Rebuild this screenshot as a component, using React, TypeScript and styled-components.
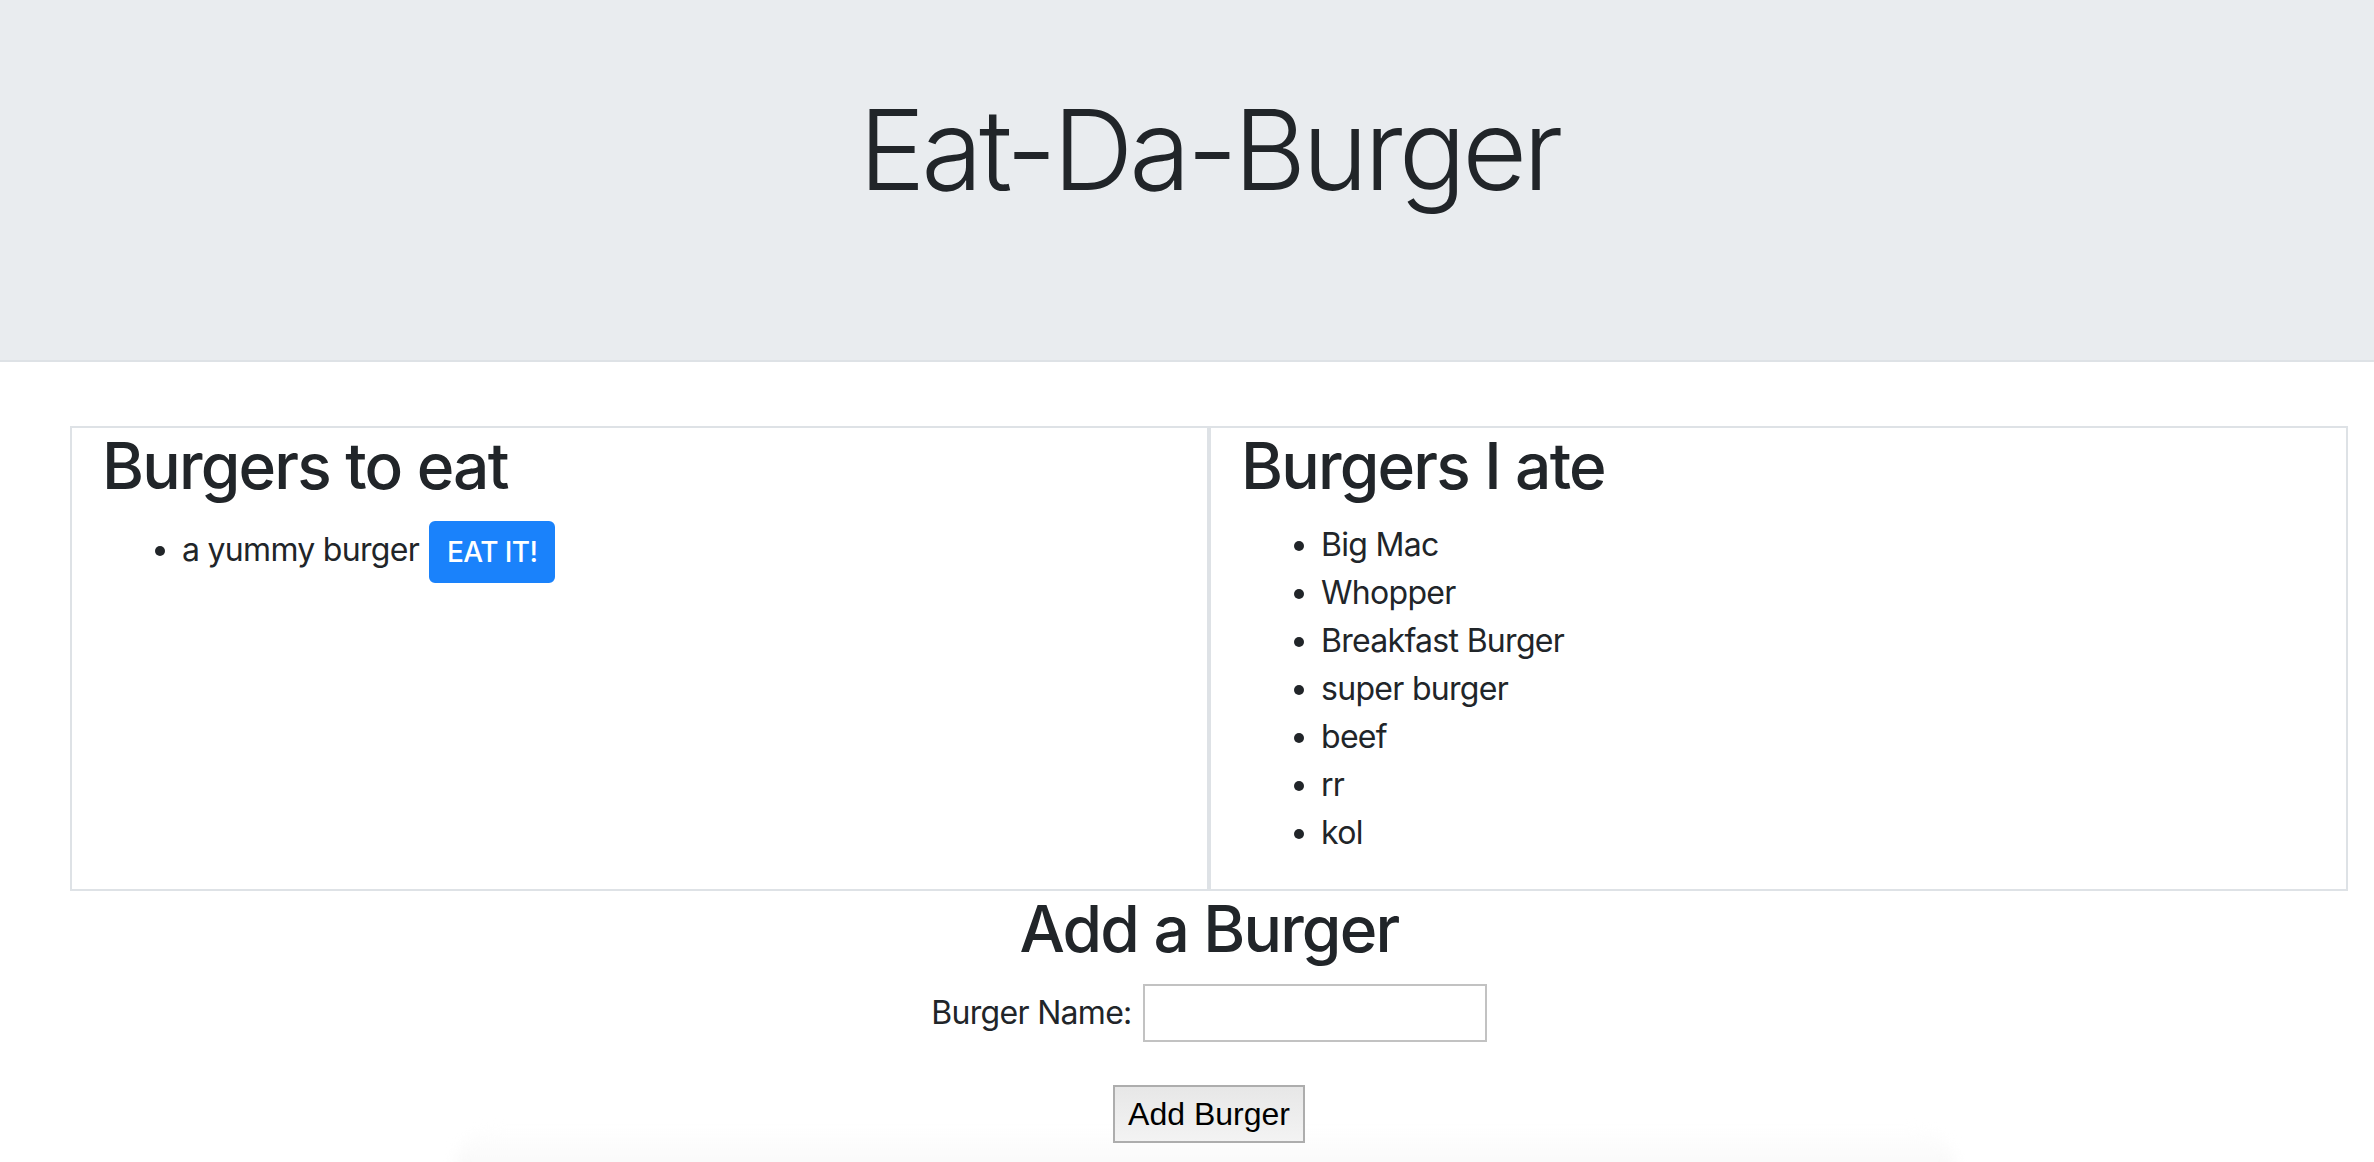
import React from "react";
import styled, { createGlobalStyle } from "styled-components";

const GlobalStyle = createGlobalStyle`
  html, body {
    margin: 0;
    padding: 0;
    background: #ffffff;
  }
  body {
    font-family: Inter, "Noto Sans", Roboto, sans-serif;
    font-size: 32px;
    line-height: 1.5;
    color: #212529;
    letter-spacing: -0.7px;
  }
  *, *::before, *::after { box-sizing: border-box; }
`;

const Page = styled.div`
  position: relative;
  min-height: 1162px;
  overflow: hidden;
`;

const Jumbotron = styled.header`
  height: 362px;
  background: #e9ecef;
  border-bottom: 2px solid #dee2e6;
  padding: 82px 26px 0 70px;
  margin-bottom: 64px;
`;

const Title = styled.h1`
  margin: 0;
  text-align: center;
  font-size: 112px;
  font-weight: 300;
  line-height: 1.2;
  letter-spacing: -4px;
`;

const Main = styled.main`
  margin: 0 26px 0 70px;
`;

const Columns = styled.div`
  display: grid;
  grid-template-columns: 1fr 1fr;
`;

const Panel = styled.section`
  border: 2px solid #dee2e6;
  padding: 0 30px;
`;

const Heading = styled.h2`
  margin: 0 0 16px;
  font-size: 64px;
  font-weight: 500;
  line-height: 1.2;
  letter-spacing: -1.8px;
`;

const CenterHeading = styled(Heading)`
  text-align: center;
`;

const List = styled.ul`
  margin: 0 0 32px;
  padding-left: 80px;
  list-style: disc;
`;

const Item = styled.li`
  font-size: 32px;
  line-height: 48px;
`;

const EatButton = styled.button`
  display: inline-block;
  vertical-align: middle;
  margin-left: 10px;
  padding: 8px 16px;
  font-family: Inter, "Noto Sans", sans-serif;
  font-size: 28px;
  line-height: 1.5;
  font-weight: 500;
  letter-spacing: -0.6px;
  color: #ffffff;
  background: #1a82fb;
  border: 2px solid #1a82fb;
  border-radius: 6px;
  cursor: pointer;
`;

const Form = styled.form`
  display: flex;
  flex-direction: column;
  align-items: center;
`;

const FieldRow = styled.div`
  display: flex;
  align-items: center;
  gap: 11px;
`;

const Label = styled.label`
  font-size: 32px;
  line-height: 48px;
`;

const TextInput = styled.input`
  width: 344px;
  height: 58px;
  padding: 2px 4px;
  font-family: Inter, sans-serif;
  font-size: 32px;
  border: 2px solid #c2c2c2;
  background: #ffffff;
  outline: none;
`;

const SubmitButton = styled.button`
  position: relative;
  z-index: 1;
  margin-top: 43px;
  height: 58px;
  padding: 0 13px;
  font-family: "Liberation Sans", Arial, sans-serif;
  font-size: 32px;
  line-height: 1;
  letter-spacing: 0;
  color: #000000;
  background: linear-gradient(#e7e7e7, #f3f3f3);
  border: 2px solid #adadad;
  border-radius: 0;
`;

const BottomShade = styled.div`
  position: absolute;
  left: 455px;
  width: 1500px;
  top: 1126px;
  height: 60px;
  background: linear-gradient(#ffffff, #f6f6f6);
  border-radius: 40px 40px 0 0;
  filter: blur(6px);
  pointer-events: none;
  z-index: 0;
`;

const toEat = ["a yummy burger"];
const eaten = ["Big Mac", "Whopper", "Breakfast Burger", "super burger", "beef", "rr", "kol"];

export default function App() {
  return (
    <Page>
      <GlobalStyle />
      <Jumbotron>
        <Title>Eat-Da-Burger</Title>
      </Jumbotron>
      <Main>
        <Columns>
          <Panel>
            <Heading>Burgers to eat</Heading>
            <List>
              {toEat.map((b) => (
                <Item key={b}>
                  {b}
                  <EatButton type="button">EAT IT!</EatButton>
                </Item>
              ))}
            </List>
          </Panel>
          <Panel>
            <Heading>Burgers I ate</Heading>
            <List>
              {eaten.map((b) => (
                <Item key={b}>{b}</Item>
              ))}
            </List>
          </Panel>
        </Columns>
        <CenterHeading>Add a Burger</CenterHeading>
        <Form onSubmit={(e) => e.preventDefault()}>
          <FieldRow>
            <Label htmlFor="burger-name">Burger Name:</Label>
            <TextInput id="burger-name" type="text" />
          </FieldRow>
          <SubmitButton type="submit">Add Burger</SubmitButton>
        </Form>
      </Main>
      <BottomShade />
    </Page>
  );
}
